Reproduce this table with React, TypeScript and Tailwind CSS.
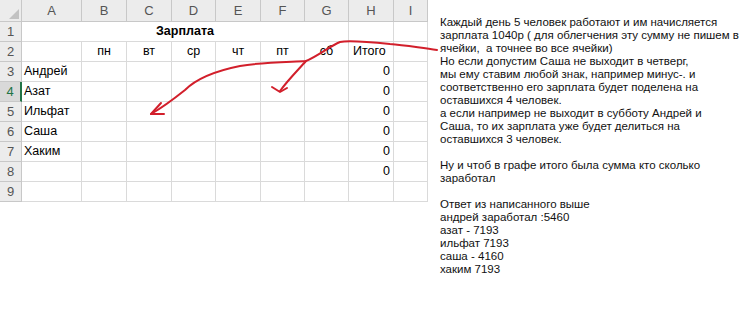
import React from "react";

const cols = ["A", "B", "C", "D", "E", "F", "G", "H", "I"];
const widths = [60, 45, 45, 44, 45, 44, 44, 45, 34];
const names = ["Андрей", "Азат", "Ильфат", "Саша", "Хаким"];
const days = ["пн", "вт", "ср", "чт", "пт", "сб"];

const lines1 = [
  "Каждый день 5 человек работают и им начисляется",
  "зарплата 1040р ( для облегчения эту сумму не пишем в",
  "ячейки,  а точнее во все ячейки)",
  "Но если допустим Саша не выходит в четверг,",
  "мы ему ставим любой знак, например минус-. и",
  "соответственно его зарплата будет поделена на",
  "оставшихся 4 человек.",
  "а если например не выходит в субботу Андрей и",
  "Саша, то их зарплата уже будет делиться на",
  "оставшихся 3 человек.",
  "",
  "Ну и чтоб в графе итого была сумма кто сколько",
  "заработал",
  "",
  "Ответ из написанного выше",
  "андрей заработал :5460",
  "азат - 7193",
  "ильфат 7193",
  "саша - 4160",
  "хаким 7193",
];

function Cell({ children, className = "" }: { children?: React.ReactNode; className?: string }) {
  return (
    <div className={`h-[20px] border-r border-b border-[#dadada] flex items-center overflow-visible whitespace-nowrap ${className}`}>
      {children}
    </div>
  );
}

export default function App() {
  const rows = [];
  for (let r = 1; r <= 9; r++) {
    const selected = r === 4;
    const rowHeader = (
      <div
        key={`rh${r}`}
        className={`h-[20px] flex items-center justify-center border-b border-[#c8c8c8] text-[13px] ${
          selected ? "bg-[#d9d9d9] text-[#217346] border-r-2 border-r-[#217346]" : "bg-[#ececec] text-[#555] border-r border-r-[#c8c8c8]"
        }`}
      >
        {r}
      </div>
    );
    rows.push(rowHeader);
    if (r === 1) {
      rows.push(
        <div key="merged" className="col-span-7 h-[20px] border-r border-b border-[#dadada] flex items-center justify-center font-bold text-[12.5px] text-black">
          Зарплата
        </div>
      );
      rows.push(<Cell key="h1" />);
      rows.push(<Cell key="i1" />);
      continue;
    }
    for (let c = 0; c < 9; c++) {
      let content: React.ReactNode = null;
      let cls = "";
      if (r === 2) {
        if (c >= 1 && c <= 6) {
          content = days[c - 1];
          cls = "justify-center";
        } else if (c === 7) {
          content = "Итого";
          cls = "pl-[4px]";
        }
      } else {
        if (c === 0 && r - 3 < names.length) {
          content = names[r - 3];
          cls = "pl-[2px]";
        }
        if (c === 7 && r >= 3 && r <= 8) {
          content = "0";
          cls = "justify-end pr-[3px]";
        }
      }
      rows.push(
        <Cell key={`c${r}-${c}`} className={`text-[12.5px] text-black ${cls}`}>
          {content}
        </Cell>
      );
    }
  }

  return (
    <div className="relative w-[749px] h-[315px] bg-white overflow-hidden" style={{ fontFamily: '"Liberation Sans", Arial, sans-serif' }}>
      <div className="flex items-start">
        <div
          className="grid w-[428px] shrink-0 content-start"
          style={{ gridTemplateColumns: `22px ${widths.map((w) => w + "px").join(" ")}` }}
        >
          <div className="h-[22px] bg-[#ececec] border-r border-b border-[#c8c8c8] relative">
            <div className="absolute right-[2px] bottom-[2px] w-0 h-0 border-l-[10px] border-l-transparent border-b-[10px] border-b-[#c2c2c2]" />
          </div>
          {cols.map((c) => (
            <div key={c} className="h-[22px] bg-[#ececec] border-r border-b border-[#c8c8c8] flex items-center justify-center text-[13px] text-[#555]">
              {c}
            </div>
          ))}
          {rows}
        </div>
        <div className="pl-[12px] pt-[16px] text-[11.5px] leading-[13px] text-[#111] whitespace-pre">
          {lines1.map((l, i) => (
            <div key={i} className="h-[13px]">
              {l}
            </div>
          ))}
        </div>
      </div>
      <svg className="absolute left-0 top-0 pointer-events-none" width="749" height="315" viewBox="0 0 749 315">
        <g fill="none" stroke="#d21f2b" strokeWidth="2" strokeLinecap="round" strokeLinejoin="round">
          <path d="M437 50 C420 48 405 45 390 44 C370 42 350 40 340 42 C330 46 318 56 306 61 C290 62 262 62 240 66 C215 71 195 80 185 90 C175 98 165 106 151 114" />
          <path d="M161 103 L151 114 L164 114" />
          <path d="M306 61 C298 70 288 80 280 91" />
          <path d="M272 87 L280 92 L287 88" />
        </g>
      </svg>
    </div>
  );
}
